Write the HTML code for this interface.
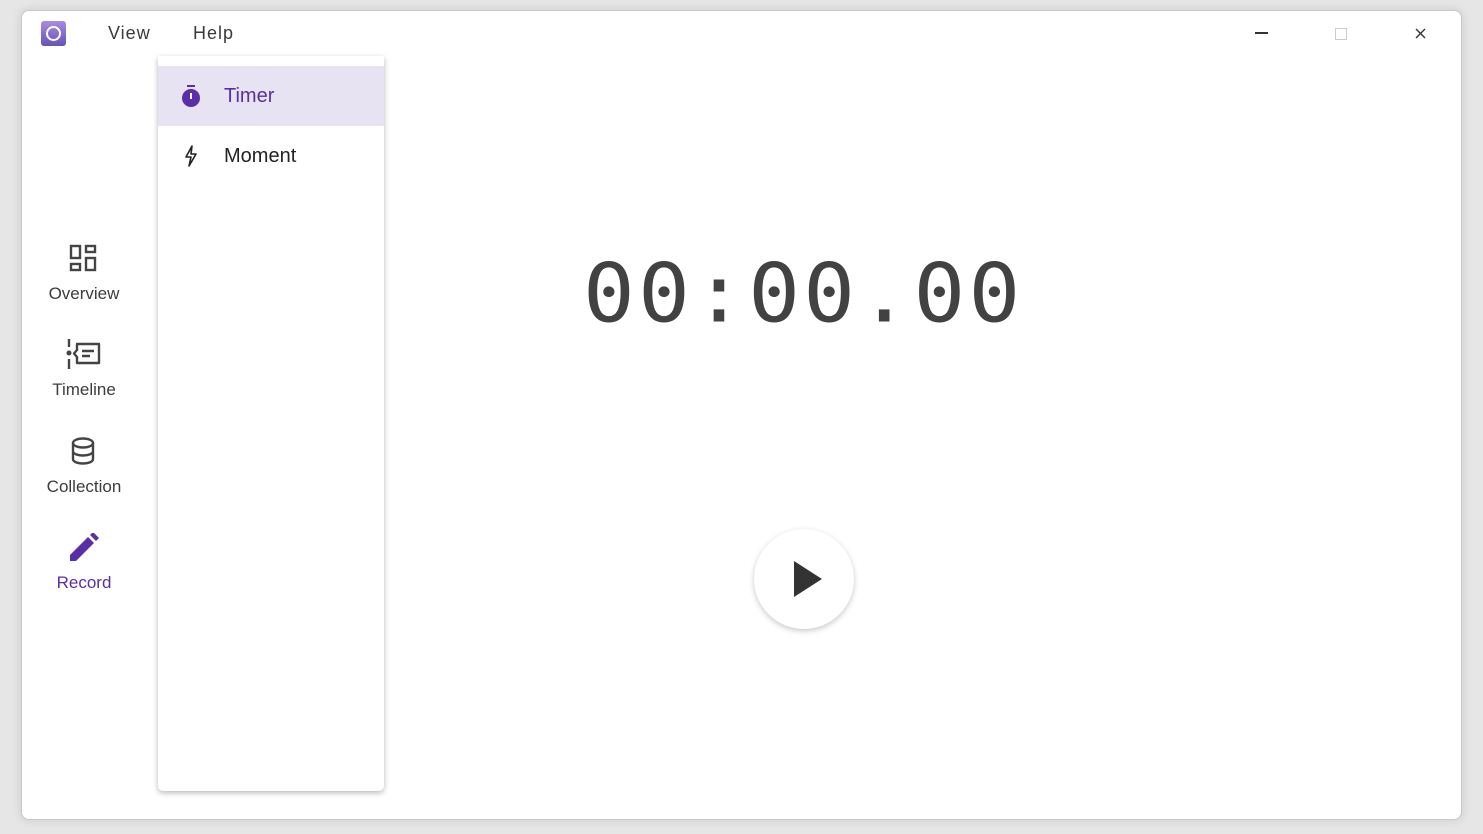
<!DOCTYPE html>
<html><head><style>
body{margin:0;width:1483px;height:834px;background:#e6e6e6;position:relative;overflow:hidden;font-family:"Liberation Sans",Roboto,sans-serif}
.win{position:absolute;left:21px;top:10px;width:1439px;height:808px;background:#fff;border:1px solid #c8c8c8;border-radius:8px;box-shadow:0 0 10px rgba(0,0,0,.12)}
.t{position:absolute;white-space:nowrap}
.menu{position:absolute;left:158px;top:56px;width:226px;height:735px;background:#fff;border-radius:0 0 5px 5px;box-shadow:0 2px 6px rgba(0,0,0,.28)}
.nav{position:absolute;width:124px;left:22px;text-align:center;font-size:17px;color:#3c3c3c}
</style></head><body>
<div class="win"></div>
<div style="position:absolute;left:41px;top:21px;width:25px;height:25px;border-radius:3px;background:linear-gradient(#a98be6,#6653b3)"></div>
<div style="position:absolute;left:46px;top:26px;width:11px;height:11px;border:2px solid #fff;border-radius:50%"></div>
<div style="position:absolute;left:52px;top:32px;width:3px;height:3px;background:#8a70d0;border-radius:50%"></div>
<div class="t" style="left:108px;top:23px;font-size:18px;color:#3a3a3a;letter-spacing:1px">View</div>
<div class="t" style="left:193px;top:23px;font-size:18px;color:#3a3a3a;letter-spacing:1px">Help</div>
<div style="position:absolute;left:1255px;top:32px;width:13px;height:2px;background:#333"></div>
<div style="position:absolute;left:1335px;top:28px;width:10px;height:10px;border:1px solid #ccc"></div>
<svg style="position:absolute;left:1415px;top:28px" width="11" height="11"><path d="M1 1L10 10M10 1L1 10" stroke="#333" stroke-width="1.4"/></svg>

<div class="menu">
 <div style="position:absolute;left:0;top:10px;width:226px;height:60px;background:#e8e3f3"></div>
 <svg style="position:absolute;left:22px;top:29px" width="22" height="24" viewBox="0 0 22 24"><rect x="7" y="0" width="8" height="2" fill="#5a2ea6"/><circle cx="11" cy="13" r="9" fill="#5a2ea6"/><rect x="10" y="8" width="2" height="6" fill="#fff"/></svg>
 <div class="t" style="left:66px;top:29px;font-size:20px;color:#5a2ea6">Timer</div>
 <svg style="position:absolute;left:26px;top:89px" width="14" height="22" viewBox="0 0 14 22"><path d="M8 1L2 12H7L5 21L12 9H7Z" fill="none" stroke="#222" stroke-width="1.6" stroke-linejoin="round"/></svg>
 <div class="t" style="left:66px;top:89px;font-size:20px;color:#222">Moment</div>
</div>

<svg style="position:absolute;left:69px;top:244px" width="28" height="28" viewBox="0 0 28 28" fill="none" stroke="#444" stroke-width="2.4"><rect x="2" y="2" width="9" height="12"/><rect x="17" y="2" width="9" height="6"/><rect x="2" y="20" width="9" height="6"/><rect x="17" y="14" width="9" height="12"/></svg>
<div class="nav" style="top:284px">Overview</div>
<svg style="position:absolute;left:66px;top:339px" width="36" height="32" viewBox="0 0 36 32"><path d="M3 0V8M3 20V30" stroke="#444" stroke-width="2.4"/><circle cx="3" cy="14" r="2.5" fill="#444"/><path d="M11 5H33V24H11V18L8 14.5L11 11Z" fill="none" stroke="#444" stroke-width="2.4" stroke-linejoin="round"/><path d="M16 12H28M16 17H24" stroke="#444" stroke-width="2.4"/></svg>
<div class="nav" style="top:380px">Timeline</div>
<svg style="position:absolute;left:70px;top:437px" width="26" height="28" viewBox="0 0 26 28" fill="none" stroke="#444" stroke-width="2.4"><ellipse cx="13" cy="6" rx="10" ry="4.5"/><path d="M3 6V22C3 25 8 26.5 13 26.5S23 25 23 22V6M3 14C3 17 8 18.5 13 18.5S23 17 23 14"/></svg>
<div class="nav" style="top:477px">Collection</div>
<svg style="position:absolute;left:69px;top:533px" width="30" height="30" viewBox="0 0 30 30"><path d="M1 28V22L19 4L25 10L7 28Z" fill="#5a2ea6"/><path d="M21 2L24 -1L30 5L27 8Z" fill="#5a2ea6"/></svg>
<div class="nav" style="top:573px;color:#5a2ea6">Record</div>

<div class="t" style="left:583px;top:247px;font-family:'DejaVu Sans Mono',monospace;font-size:86px;color:#424242;letter-spacing:3.3px;transform:scaleY(0.945);transform-origin:0 0">00:00.00</div>

<div style="position:absolute;left:754px;top:529px;width:100px;height:100px;border-radius:50%;background:#fff;box-shadow:0 2px 6px rgba(0,0,0,.22)"></div>
<svg style="position:absolute;left:794px;top:561px" width="28" height="36"><path d="M0 0L28 18L0 36Z" fill="#333"/></svg>
</body></html>
